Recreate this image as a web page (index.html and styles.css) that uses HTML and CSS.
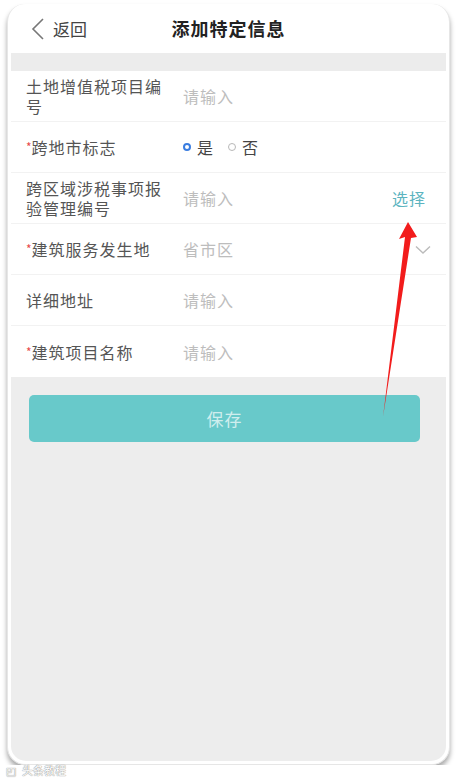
FILE: index.html
```html
<!DOCTYPE html>
<html lang="zh-CN">
<head>
    <meta charset="UTF-8">
    <title>添加特定信息</title>
    <link rel="stylesheet" href="styles.css">
</head>
<body>
<div class="phone">

    <!--顶部导航-->
    <div class="header">
        <div class="back">
            <svg width="14" height="22" viewBox="0 0 14 22"><path d="M12 1 L2 11 L12 21" fill="none" stroke="#777" stroke-width="1.6"/></svg>
            <span>返回</span>
        </div>
        <div class="title">添加特定信息</div>
    </div>

    <div class="band"></div>

    <!--表单部分-->
    <ul class="form">
        <li>
            <div class="label">土地增值税项目编号</div>
            <div class="value holder">请输入</div>
        </li>
        <li>
            <div class="label"><i>*</i>跨地市标志</div>
            <div class="value radios">
                <span class="radio on"></span><span class="txt">是</span>
                <span class="radio"></span><span class="txt">否</span>
            </div>
        </li>
        <li>
            <div class="label">跨区域涉税事项报验管理编号</div>
            <div class="value holder">请输入</div>
            <div class="pick">选择</div>
        </li>
        <li>
            <div class="label"><i>*</i>建筑服务发生地</div>
            <div class="value holder">省市区</div>
            <svg class="down" width="16" height="10" viewBox="0 0 16 10"><path d="M1 1.5 L8 8 L15 1.5" fill="none" stroke="#bbb" stroke-width="1.4"/></svg>
        </li>
        <li>
            <div class="label">详细地址</div>
            <div class="value holder">请输入</div>
        </li>
        <li>
            <div class="label"><i>*</i>建筑项目名称</div>
            <div class="value holder">请输入</div>
        </li>
    </ul>

    <!--保存按钮-->
    <div class="foot">
        <div class="save">保存</div>
    </div>
</div>

<!--标注箭头-->
<svg class="arrow" width="458" height="780" viewBox="0 0 458 780">
    <polygon points="408,222 399,239 405,237 383,417 411,238 417,237" fill="#f21c1c"/>
</svg>

<div class="mark"><span class="logo">◰</span>头条教程</div>
</body>
</html>
```

FILE: styles.css
```css
*{
    margin: 0;
    padding: 0;
}
li{
    list-style: none;
}
body{
    background: #fff;
    font-family: "Noto Sans CJK SC", "Noto Sans", sans-serif;
}
.phone{
    display: flex;
    flex-direction: column;
    overflow: hidden;
    height: 761px;
    margin: 4px 8px 0 7px;
    padding: 0 3px 3px;
    border-radius: 18px;
    background: #fff;
    border: 1px solid #e6e6e6;
    border-top: 0;
    box-sizing: border-box;
    box-shadow: 0 4px 5px rgba(0,0,0,0.35);
}
.header{
    position: relative;
    display: flex;
    align-items: center;
    flex-shrink: 0;
    height: 49px;
}
.back{
    display: flex;
    align-items: center;
    padding-left: 20px;
    font-size: 17px;
    color: #444;
}
.back svg{
    margin-right: 8px;
}
.title{
    position: absolute;
    left: 0;
    right: 0;
    top: 0;
    line-height: 49px;
    text-align: center;
    font-size: 18px;
    font-weight: bold;
    color: #222;
    letter-spacing: 1px;
    pointer-events: none;
}
.band{
    flex-shrink: 0;
    height: 18px;
    background: #ececec;
}
.form{
    flex-shrink: 0;
    background: #fff;
}
.form li{
    display: flex;
    align-items: center;
    height: 51px;
    border-bottom: 1px solid #f2f2f2;
    box-sizing: border-box;
    font-size: 16px;
    letter-spacing: 1px;
    line-height: 20px;
}
.form li:last-child{
    border-bottom: 0;
}
.label{
    flex-shrink: 0;
    width: 172px;
    padding: 0 17px 0 15px;
    box-sizing: border-box;
    color: #555;
}
.label i{
    font-style: normal;
    font-size: 12px;
    color: #e84a4a;
    letter-spacing: 0;
    vertical-align: 2px;
}
.value{
    flex: 1;
}
.holder{
    color: #bdbdbd;
}
.radios{
    display: flex;
    align-items: center;
    color: #444;
}
.radio{
    width: 6px;
    height: 6px;
    border: 1.5px solid #b8b8b8;
    border-radius: 50%;
    margin-right: 6px;
}
.radio.on{
    width: 4px;
    height: 4px;
    border: 2.5px solid #3a7de0;
}
.txt{
    margin-right: 14px;
}
.pick{
    padding-right: 20px;
    color: #5cb4bf;
}
.down{
    margin-right: 15px;
    margin-top: 2px;
}
.foot{
    flex: 1;
    padding: 18px 26px 0 18px;
    background: #ededed;
    border-radius: 0 0 15px 15px;
}
.save{
    height: 47px;
    line-height: 47px;
    border-radius: 5px;
    background: #68c9ca;
    text-align: center;
    font-size: 17px;
    letter-spacing: 1px;
    color: rgba(255,255,255,0.7);
}
.arrow{
    position: absolute;
    left: 0;
    top: 0;
    pointer-events: none;
}
.mark{
    position: absolute;
    left: 6px;
    top: 763px;
    font-size: 11px;
    line-height: 14px;
    color: #fff;
    text-shadow: 0 0 1px #888, 0 0 1px #888;
}
.mark .logo{
    margin-right: 6px;
}
```
